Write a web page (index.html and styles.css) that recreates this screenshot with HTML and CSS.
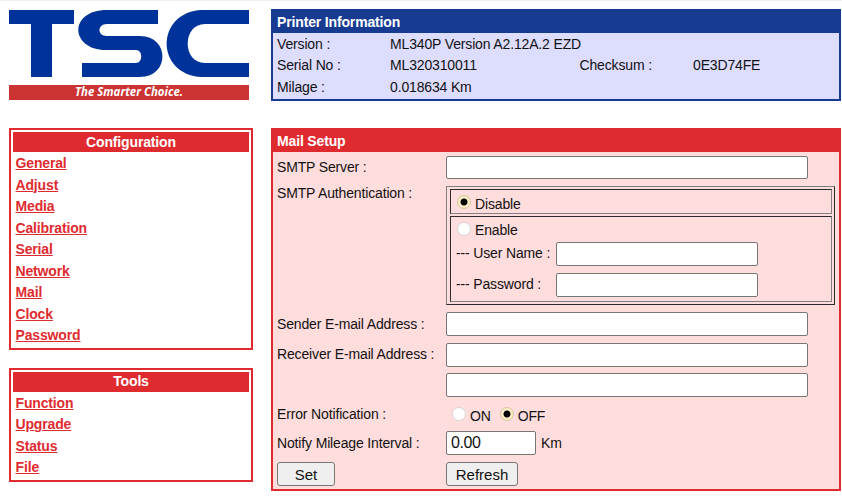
FILE: index.html
```html
<!DOCTYPE html>
<html lang="en">
<head>
<meta charset="utf-8">
<title>Mail Setup</title>
<link rel="stylesheet" href="styles.css">
</head>
<body>
<div class="page">
  <svg class="logo" width="240" height="90" viewBox="0 0 240 90">
    <g fill="#003399">
      <path d="M0 0H65V14H43V67H22V14H0Z"/>
      <path d="M149 0V14H98C88 14 88 26 98 26H131C161 26 161 67 131 67H73V53H127C134 53 134 40 127 40H97C61 40 59 0 98 0Z"/>
      <path d="M240 0V14H196C173 14 173 53 196 53H240V67H193C146 65 146 2 193 0Z"/>
    </g>
    <path fill="#cc3333" d="M0 75H240V90H0Z"/>
    <text class="slogan" x="66" y="86" textLength="108" lengthAdjust="spacingAndGlyphs">The Smarter Choice.</text>
  </svg>

  <section class="panel info">
    <h2>Printer Information</h2>
    <dl>
      <dt>Version :</dt><dd class="wide">ML340P Version A2.12A.2 EZD</dd>
      <dt>Serial No :</dt><dd>ML320310011</dd><dt>Checksum :</dt><dd>0E3D74FE</dd>
      <dt>Milage :</dt><dd class="wide">0.018634 Km</dd>
    </dl>
  </section>

  <aside>
    <nav class="menu">
      <h2>Configuration</h2>
      <a href="#">General</a><a href="#">Adjust</a><a href="#">Media</a><a href="#">Calibration</a><a href="#">Serial</a><a href="#">Network</a><a href="#">Mail</a><a href="#">Clock</a><a href="#">Password</a>
    </nav>
    <nav class="menu tools">
      <h2>Tools</h2>
      <a href="#">Function</a><a href="#">Upgrade</a><a href="#">Status</a><a href="#">File</a>
    </nav>
  </aside>

  <form class="panel mail">
    <h2>Mail Setup</h2>
    <div class="fields">
      <label>SMTP Server :</label><input type="text" class="server">
      <label class="auth-label">SMTP Authentication :</label>
      <div class="auth">
        <div class="cell disable"><input type="radio" name="auth" checked><span>Disable</span></div>
        <div class="cell enable">
          <div class="choice"><input type="radio" name="auth"><span>Enable</span></div>
          <div class="cred"><label>--- User Name :</label><input type="text"></div>
          <div class="cred"><label>--- Password :</label><input type="text"></div>
        </div>
      </div>
      <label class="low">Sender E-mail Address :</label><input type="text">
      <label>Receiver E-mail Address :</label><input type="text">
      <span></span><input type="text">
      <label>Error Notification :</label>
      <div class="choice notify"><input type="radio" name="err"><span>ON</span><input type="radio" name="err" checked><span>OFF</span></div>
      <label class="low">Notify Mileage Interval :</label>
      <div class="interval"><input type="text" value="0.00"><span>Km</span></div>
      <button type="button" class="set">Set</button>
      <button type="button" class="refresh">Refresh</button>
    </div>
  </form>
</div>
</body>
</html>
```
FILE: styles.css
```css
* { box-sizing: border-box; }
body {
  margin: 0;
  height: 496px;
  overflow: hidden;
  background: #fff;
  border-top: 1px solid #f2f2f2;
  color: #111;
  font: 14px/21px "Liberation Sans", Arial, sans-serif;
  letter-spacing: -0.15px;
}
.page {
  display: grid;
  grid-template-columns: 244px 570px;
  grid-template-rows: 92px 363px;
  gap: 27px 18px;
  padding: 8px 0 0 9px;
}
.logo { display: block; margin-top: 1px; }
.slogan { fill: #fff; font: italic bold 11.5px "Open Sans", sans-serif; letter-spacing: 0; }
h2 { margin: 0; font-size: 14px; font-weight: bold; color: #fff; }

.panel { border: 2px solid; }
.panel h2 { height: 22px; padding-left: 4px; line-height: 22px; }
.info { border-color: #183b92; background: #ddf; }
.info h2 { background: #183b92; }
.info dl {
  display: grid;
  grid-template-columns: 113px 189.5px 113.5px 1fr;
  grid-auto-rows: 21.5px;
  margin: 0;
  padding: 0.9px 0 0 4px;
}
.info dd { margin: 0; }
.info .wide { grid-column: 2 / -1; }

.menu { height: 222px; border: 2px solid #df2b30; padding: 2px; }
.menu h2 { height: 20px; line-height: 20px; background: #df2b30; text-align: center; }
.menu a {
  display: block;
  width: fit-content;
  height: 21.5px;
  margin-left: 2.5px;
  color: #df2b30;
  font-weight: bold;
  line-height: 22px;
}
.tools { height: 114px; margin-top: 18px; }
.tools h2 { margin-bottom: -0.1px; line-height: 18px; }

.mail { border-color: #df2b30; background: #fdd; }
.mail h2 { height: 22px; line-height: 22px; background: #df2b30; }
.fields {
  display: grid;
  grid-template-columns: 169px 389px;
  grid-template-rows: 30px 126px 31px 30px 30px 28px 31px 24px;
  padding: 4px 0 0 4px;
}
input[type=text] {
  width: 362px;
  height: 24px;
  margin: 0;
  padding: 0 4px;
  border: 1px solid #767676;
  border-radius: 2px;
  background: #fff;
  color: #111;
  font: 16px "Liberation Sans", Arial, sans-serif;
  letter-spacing: -0.4px;
}
input.server { height: 23px; }
.fields > label { padding-top: 1px; }
.fields > .low { padding-top: 2px; }
.fields > .auth-label { margin-top: -4px; }
.auth {
  height: 119px;
  border: 1px solid;
  border-color: #808080 #2b2b2b #2b2b2b #808080;
  padding: 2px 2px 2px 3px;
}
.cell {
  border: 1px solid;
  border-color: #2b2b2b #808080 #808080 #2b2b2b;
}
.disable { display: flex; height: 25px; padding: 4px 0 0 5px; }
.enable { height: 86px; margin-top: 2px; padding: 4px 0 0 5px; }
.choice { display: flex; }
input[type=radio] {
  appearance: none;
  flex: none;
  width: 14px;
  height: 14px;
  margin: 1px 4px 0 1px;
  border: 1px solid #d5d5d5;
  border-radius: 50%;
  background: #fff;
}
input[type=radio]:checked {
  border-color: #d6c69c;
  background: radial-gradient(circle, #000 0 3.1px, #fbecc8 3.9px);
}
.enable .choice { height: 21px; }
.enable .choice span { margin-top: -1px; }
.cred { display: flex; height: 31px; }
.cred label { width: 100px; line-height: 22px; }
.cred input[type=text] { width: 202px; }
.notify { padding: 3px 0 0 5px; }
.notify span { margin-right: 8px; }
.interval { display: flex; }
.interval input[type=text] { width: 90px; }
.interval span { margin-left: 5px; line-height: 24px; }
button {
  height: 24px;
  padding: 0;
  border: 1px solid #767676;
  border-radius: 3px;
  background: #efefef;
  color: #111;
  font: 15px "Liberation Sans", Arial, sans-serif;
}
.set { width: 58px; }
.refresh { width: 72px; }
```
